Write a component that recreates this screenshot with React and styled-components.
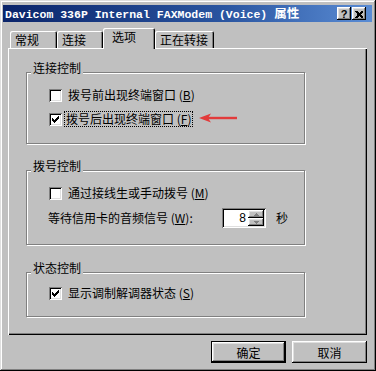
import styled, { createGlobalStyle } from "styled-components";

const GlobalStyle = createGlobalStyle`
    html, body {
        margin: 0;
        padding: 0;
        background: #c0c0c0;
    }
    body {
        font-family: "Noto Sans CJK SC", "Liberation Sans", sans-serif;
        font-size: 12px;
        color: #000000;
    }
`;

const raised = `
    box-shadow: inset -1px -1px #000000, inset 1px 1px #ffffff,
        inset -2px -2px #808080, inset 2px 2px #dfdfdf;
`;

const sunken = `
    box-shadow: inset 1px 1px #808080, inset -1px -1px #ffffff,
        inset 2px 2px #000000, inset -2px -2px #dfdfdf;
`;

function CheckMark() {
    const tops = [2, 3, 4, 3, 2, 1, 0];
    const d = tops.map((t, i) => `M${3 + i} ${3 + t}h1v3h-1z`).join("");
    return (
        <svg width="13" height="13" viewBox="0 0 13 13" shapeRendering="crispEdges">
            <path d={d} fill="#000000" />
        </svg>
    );
}

function RedArrow() {
    return (
        <svg width="40" height="12" viewBox="0 0 40 12">
            <path d="M1 6 L13 1.5 L10 6 L13 10.5 Z" fill="#e23b3b" />
            <line x1="9" y1="6" x2="39" y2="6" stroke="#e23b3b" strokeWidth="2.4" />
        </svg>
    );
}

function Accel({ text, letter, tail = "" }) {
    return (
        <>
            {text} (<u>{letter}</u>){tail}
        </>
    );
}

export default function App() {
    return (
        <>
            <GlobalStyle />
            <Window>
                <TitleBar>
                    <TitleText>
                        Davicom 336P Internal FAXModem (Voice) <Cjk>属性</Cjk>
                    </TitleText>
                    <TitleButtons>
                        <TitleBtn>?</TitleBtn>
                        <TitleBtn>
                            <svg width="8" height="7" viewBox="0 0 8 7" shapeRendering="crispEdges">
                                <path d="M0 0h2l2 2 2-2h2v1l-2 2v1l2 2v1h-2l-2-2-2 2h-2v-1l2-2v-1l-2-2z" fill="#000000" />
                            </svg>
                        </TitleBtn>
                    </TitleButtons>
                </TitleBar>

                <Body>
                    <TabStrip>
                        <Tab $w={47} $pl={5}>常规</Tab>
                        <Tab $w={46} $pl={5}>连接</Tab>
                        <Tab $w={52} $pl={9} $active>选项</Tab>
                        <Tab $w={59} $pl={5}>正在转接</Tab>
                    </TabStrip>

                    <Page>
                        <Group $h={72} $mt={0}>
                            <Caption>连接控制</Caption>
                            <Rows $top={8} $gap={0}>
                                <Row>
                                    <CheckBox />
                                    <Label><Accel text="拨号前出现终端窗口" letter="B" /></Label>
                                </Row>
                                <Row>
                                    <CheckBox><CheckMark /></CheckBox>
                                    <Label $focus><Accel text="拨号后出现终端窗口" letter="F" /></Label>
                                    <ArrowSlot><RedArrow /></ArrowSlot>
                                </Row>
                            </Rows>
                        </Group>

                        <Group $h={75} $mt={26}>
                            <Caption>拨号控制</Caption>
                            <Rows $top={8} $gap={1}>
                                <Row>
                                    <CheckBox />
                                    <Label><Accel text="通过接线生或手动拨号" letter="M" /></Label>
                                </Row>
                                <Row>
                                    <WaitLabel><Accel text="等待信用卡的音频信号" letter="W" tail=":" /></WaitLabel>
                                    <Spin>
                                        <SpinValue>8</SpinValue>
                                        <SpinButtons>
                                            <SpinBtn>
                                                <svg width="5" height="3" viewBox="0 0 5 3" shapeRendering="crispEdges">
                                                    <path d="M2 0h1v1h1v1h1v1h-5v-1h1v-1h1z" fill="#808080" />
                                                </svg>
                                            </SpinBtn>
                                            <SpinBtn>
                                                <svg width="5" height="3" viewBox="0 0 5 3" shapeRendering="crispEdges">
                                                    <path d="M0 0h5v1h-1v1h-1v1h-1v-1h-1v-1h-1z" fill="#808080" />
                                                </svg>
                                            </SpinBtn>
                                        </SpinButtons>
                                    </Spin>
                                    <Unit>秒</Unit>
                                </Row>
                            </Rows>
                        </Group>

                        <Group $h={45} $mt={27}>
                            <Caption>状态控制</Caption>
                            <Rows $top={6} $gap={0}>
                                <Row>
                                    <CheckBox><CheckMark /></CheckBox>
                                    <Label><Accel text="显示调制解调器状态" letter="S" /></Label>
                                </Row>
                            </Rows>
                        </Group>
                    </Page>

                    <ButtonRow>
                        <Button $default>确定</Button>
                        <Button>取消</Button>
                    </ButtonRow>
                </Body>
            </Window>
        </>
    );
}

const Window = styled.div`
    box-sizing: border-box;
    width: 376px;
    height: 371px;
    padding: 5px 4px 3px 3px;
    background: #c0c0c0;
    box-shadow: inset -1px -1px #000000, inset 1px 1px #dfdfdf,
        inset -2px -2px #808080, inset 2px 2px #ffffff;
    display: flex;
    flex-direction: column;
`;

const TitleBar = styled.div`
    height: 17px;
    display: flex;
    align-items: center;
    padding: 0 6px 0 2px;
    background: linear-gradient(90deg, #0a246a 0%, #2a55a0 60%, #5a8cd4 100%);
`;

const TitleText = styled.div`
    flex: 1;
    color: #ffffff;
    font-family: "Liberation Mono", "Noto Sans CJK SC", monospace;
    font-weight: 700;
    font-size: 11.5px;
    line-height: 17px;
    white-space: nowrap;
    overflow: hidden;
`;

const Cjk = styled.span`
    font-family: "Noto Sans CJK SC", sans-serif;
    font-size: 12.5px;
`;

const TitleButtons = styled.div`
    display: flex;
    gap: 1px;
`;

const TitleBtn = styled.div`
    width: 14px;
    height: 13px;
    box-sizing: border-box;
    background: #c0c0c0;
    ${raised}
    display: flex;
    align-items: center;
    justify-content: center;
    font-family: "Liberation Sans", sans-serif;
    font-weight: 700;
    font-size: 11px;
    line-height: 13px;
    padding-top: 1px;
`;

const Body = styled.div`
    flex: 1;
    display: flex;
    flex-direction: column;
    padding: 0 5px;
`;

const TabStrip = styled.div`
    display: flex;
    align-items: flex-end;
    height: 20px;
    margin-top: 6px;
    padding-left: 2px;
    position: relative;
    z-index: 1;
`;

const Tab = styled.div`
    box-sizing: border-box;
    width: ${p => p.$w}px;
    height: ${p => (p.$active ? 21 : 17)}px;
    margin-bottom: ${p => (p.$active ? -1 : 0)}px;
    padding-left: ${p => p.$pl}px;
    padding-bottom: ${p => (p.$active ? 4 : 0)}px;
    display: flex;
    align-items: center;
    line-height: 14px;
    background: #c0c0c0;
    border-radius: 2px 2px 0 0;
    box-shadow: inset 1px 1px #ffffff, inset -1px 0 #000000, inset -2px 0 #808080;
    position: relative;
    z-index: ${p => (p.$active ? 2 : 1)};
`;

const Page = styled.div`
    position: relative;
    z-index: 0;
    box-sizing: border-box;
    height: 287px;
    padding: 24px 0 0 18px;
    background: #c0c0c0;
    box-shadow: inset 1px 1px #ffffff, inset -1px -1px #000000, inset -2px -2px #808080;
`;

const Group = styled.div`
    box-sizing: border-box;
    width: 279px;
    height: ${p => p.$h}px;
    margin-top: ${p => p.$mt}px;
    border: 1px solid #808080;
    box-shadow: inset 1px 1px #ffffff, 1px 1px #ffffff;
`;

const Caption = styled.span`
    display: block;
    width: fit-content;
    height: 14px;
    margin: -12px 0 0 4px;
    padding: 0 2px;
    line-height: 14px;
    background: #c0c0c0;
`;

const Rows = styled.div`
    display: flex;
    flex-direction: column;
    gap: ${p => p.$gap}px;
    margin-top: ${p => p.$top}px;
    padding-left: 22px;
`;

const Row = styled.div`
    display: flex;
    align-items: center;
    height: 24px;
`;

const CheckBox = styled.div`
    box-sizing: border-box;
    width: 13px;
    height: 13px;
    flex: none;
    background: #ffffff;
    ${sunken}
    display: flex;
`;

const Label = styled.span`
    height: 14px;
    line-height: 14px;
    margin-left: ${p => (p.$focus ? 2 : 4)}px;
    padding: 0 1px;
    border: 1px dotted ${p => (p.$focus ? "#000000" : "transparent")};
    white-space: nowrap;
`;

const ArrowSlot = styled.span`
    display: flex;
    margin-left: 5px;
    margin-top: -2px;
`;

const WaitLabel = styled.span`
    width: 174px;
    margin-left: -1px;
    line-height: 14px;
    white-space: nowrap;
`;

const Spin = styled.div`
    box-sizing: border-box;
    width: 44px;
    height: 20px;
    padding: 2px;
    display: flex;
    background: #ffffff;
    ${sunken}
`;

const SpinValue = styled.span`
    flex: 1;
    text-align: right;
    padding-right: 2px;
    font-family: "Liberation Sans", sans-serif;
    font-size: 12px;
    line-height: 16px;
`;

const SpinButtons = styled.div`
    width: 16px;
    display: flex;
    flex-direction: column;
`;

const SpinBtn = styled.div`
    flex: 1;
    box-sizing: border-box;
    background: #c0c0c0;
    ${raised}
    display: flex;
    align-items: center;
    justify-content: center;
`;

const Unit = styled.span`
    margin-left: 10px;
    line-height: 14px;
`;

const ButtonRow = styled.div`
    display: flex;
    justify-content: flex-end;
    gap: 6px;
    margin-top: 6px;
`;

const Button = styled.button`
    box-sizing: border-box;
    width: 75px;
    height: 22px;
    padding: 0;
    border: none;
    background: #c0c0c0;
    font-family: "Noto Sans CJK SC", sans-serif;
    font-size: 12px;
    color: #000000;
    box-shadow: ${p =>
        p.$default
            ? "inset 0 0 0 1px #000000, inset -2px -2px #000000, inset 2px 2px #ffffff, inset -3px -3px #808080, inset 3px 3px #dfdfdf"
            : "inset -1px -1px #000000, inset 1px 1px #ffffff, inset -2px -2px #808080, inset 2px 2px #dfdfdf"};
`;
